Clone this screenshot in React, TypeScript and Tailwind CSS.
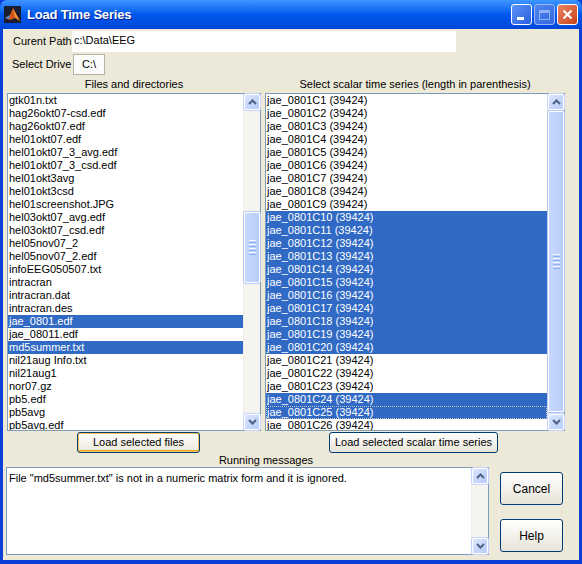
import React from "react";

const leftItems = [
  "gtk01n.txt",
  "hag26okt07-csd.edf",
  "hag26okt07.edf",
  "hel01okt07.edf",
  "hel01okt07_3_avg.edf",
  "hel01okt07_3_csd.edf",
  "hel01okt3avg",
  "hel01okt3csd",
  "hel01screenshot.JPG",
  "hel03okt07_avg.edf",
  "hel03okt07_csd.edf",
  "hel05nov07_2",
  "hel05nov07_2.edf",
  "infoEEG050507.txt",
  "intracran",
  "intracran.dat",
  "intracran.des",
  "jae_0801.edf",
  "jae_08011.edf",
  "md5summer.txt",
  "nil21aug Info.txt",
  "nil21aug1",
  "nor07.gz",
  "pb5.edf",
  "pb5avg",
  "pb5avg.edf",
];
const leftSelected = new Set([17, 19]);

const rightItems = Array.from({ length: 26 }, (_, i) => `jae_0801C${i + 1} (39424)`);
const rightSelected = new Set([9, 10, 11, 12, 13, 14, 15, 16, 17, 18, 19, 23, 24]);

function Chevron({ up }: { up: boolean }) {
  return (
    <svg width="9" height="6" viewBox="0 0 9 6">
      <path
        d={up ? "M1 5 L4.5 1.5 L8 5" : "M1 1 L4.5 4.5 L8 1"}
        fill="none"
        stroke="#4d6185"
        strokeWidth="2"
      />
    </svg>
  );
}

function ArrowBtn({ up }: { up: boolean }) {
  return (
    <div className="h-[16px] w-[16px] shrink-0 rounded-[2px] border border-[#ffffff] bg-gradient-to-br from-[#dce6fd] to-[#b6cbf8] flex items-center justify-center shadow-[0_0_0_1px_#c3d3fd]">
      <Chevron up={up} />
    </div>
  );
}

function Thumb({ cls }: { cls: string }) {
  return (
    <div className={`${cls} w-[16px] shrink-0 rounded-[2px] border border-[#ffffff] bg-gradient-to-r from-[#c9d8fc] to-[#b9cdf8] shadow-[0_0_0_1px_#b4c8f6] flex flex-col items-center justify-center gap-[1px]`}>
      <div className="h-[1px] w-[7px] bg-[#eef4fe]" />
      <div className="h-[1px] w-[7px] bg-[#8cb0f8]" />
      <div className="h-[1px] w-[7px] bg-[#eef4fe]" />
      <div className="h-[1px] w-[7px] bg-[#8cb0f8]" />
      <div className="h-[1px] w-[7px] bg-[#eef4fe]" />
      <div className="h-[1px] w-[7px] bg-[#8cb0f8]" />
      <div className="h-[1px] w-[7px] bg-[#eef4fe]" />
      <div className="h-[1px] w-[7px] bg-[#8cb0f8]" />
    </div>
  );
}

const font = { fontFamily: '"Liberation Sans", Arial, sans-serif' };

export default function App() {
  return (
    <div
      className="w-[582px] h-[564px] bg-[#0a3fd8] flex flex-col overflow-hidden text-[11px] text-black"
      style={font}
    >
      {/* Title bar */}
      <div className="h-[29px] shrink-0 flex items-center rounded-t-[7px] bg-gradient-to-b from-[#3d95ff] via-[#0058ee] to-[#0047d8] px-[4px]">
        <svg width="17" height="17" viewBox="0 0 17 17" className="shrink-0">
          <rect x="0" y="0" width="17" height="17" fill="#1a1d2e" />
          <path d="M1 12 L6 9 L9 2 L12 8 L16 15 L11 12 L6 14 Z" fill="#d8561c" />
          <path d="M9 2 L12 8 L16 15 L11 11 Z" fill="#f3a03a" />
          <path d="M1 12 L6 9 L5 13 Z" fill="#4a8cd4" />
        </svg>
        <div className="ml-[6px] text-[13px] font-bold text-white tracking-[-0.2px] [text-shadow:1px_1px_0_#0a1f8a]">
          Load Time Series
        </div>
        <div className="flex-1" />
        <div className="flex gap-[2px] items-center">
          <div className="h-[21px] w-[21px] rounded-[3px] border border-white bg-gradient-to-br from-[#5b92f7] to-[#2a60e0] flex items-end pl-[5px] pb-[4px]">
            <div className="h-[3px] w-[7px] bg-white" />
          </div>
          <div className="h-[21px] w-[21px] rounded-[3px] border border-[#9bb6f5] bg-gradient-to-br from-[#4d86f2] to-[#3468e2] flex items-center justify-center">
            <div className="h-[10px] w-[11px] border border-[#8fb0f5] border-t-[3px]" />
          </div>
          <div className="h-[21px] w-[21px] rounded-[3px] border border-white bg-gradient-to-br from-[#e8845e] to-[#c9431c] flex items-center justify-center">
            <svg width="11" height="11" viewBox="0 0 11 11">
              <path d="M1.5 1.5 L9.5 9.5 M9.5 1.5 L1.5 9.5" stroke="white" strokeWidth="2.2" />
            </svg>
          </div>
        </div>
      </div>

      {/* Body */}
      <div className="flex-1 mx-[3px] mb-[4px] bg-[#ece9d8] flex flex-col pl-[4px]">
        {/* Row 1 */}
        <div className="mt-[2px] h-[21px] flex items-start">
          <div className="w-[65px] pl-[6px] pt-[2px]">Curent Path</div>
          <div className="w-[384px] h-[21px] bg-white pl-[2px] pt-[1px]">c:\Data\EEG</div>
        </div>
        {/* Row 2 */}
        <div className="mt-[2px] h-[21px] flex items-center">
          <div className="w-[66px] pl-[5px]">Select Drive</div>
          <div className="w-[32px] h-[21px] bg-[#fbfbf9] border border-[#b5b2a4] flex items-center justify-center">
            C:\
          </div>
        </div>
        {/* Headers */}
        <div className="h-[18px] flex items-center">
          <div className="w-[254px] text-center pt-[1px]">Files and directories</div>
          <div className="w-[300px] ml-[4px] text-center pt-[1px]">
            Select scalar time series (length in parenthesis)
          </div>
        </div>
        {/* Lists */}
        <div className="h-[338px] flex gap-[4px]">
          <div className="w-[254px] h-[338px] border border-[#7f9db9] bg-white flex">
            <div className="flex-1 overflow-hidden flex flex-col">
              {leftItems.map((t, i) => (
                <div
                  key={t}
                  className={`h-[13px] shrink-0 leading-[13px] pl-[1px] whitespace-nowrap ${
                    leftSelected.has(i) ? "bg-[#316ac5] text-white" : ""
                  }`}
                >
                  {t}
                </div>
              ))}
            </div>
            <div className="w-[17px] bg-[#f5f4ef] border-l border-[#eeede5] flex flex-col items-center">
              <ArrowBtn up />
              <div className="h-[102px] shrink-0" />
              <Thumb cls="h-[71px]" />
              <div className="flex-1" />
              <ArrowBtn up={false} />
            </div>
          </div>
          <div className="w-[300px] h-[338px] border border-[#7f9db9] bg-white flex">
            <div className="flex-1 overflow-hidden flex flex-col">
              {rightItems.map((t, i) => (
                <div
                  key={t}
                  className={`h-[13px] shrink-0 leading-[13px] pl-[1px] whitespace-nowrap ${
                    rightSelected.has(i) ? "bg-[#316ac5] text-white" : ""
                  } ${i === 24 ? "outline outline-1 outline-dotted outline-offset-[-1px] outline-[#c0c0c0]" : ""}`}
                >
                  {t}
                </div>
              ))}
            </div>
            <div className="w-[17px] bg-[#f5f4ef] border-l border-[#eeede5] flex flex-col items-center">
              <ArrowBtn up />
              <div className="h-[1px] shrink-0" />
              <Thumb cls="flex-1" />
              <div className="h-[2px] shrink-0" />
              <ArrowBtn up={false} />
            </div>
          </div>
        </div>
        {/* Buttons row */}
        <div className="mt-[1px] h-[21px] flex">
          <div className="ml-[70px] w-[123px] h-[21px] rounded-[3px] border border-[#003c74] bg-gradient-to-b from-[#ffffff] to-[#ece9d8] shadow-[inset_0_0_0_1px_#f7c457,inset_0_-1px_0_1px_#e59f2a] flex items-center justify-center">
            Load selected files
          </div>
          <div className="ml-[129px] w-[169px] h-[21px] rounded-[3px] border border-[#003c74] bg-gradient-to-b from-[#ffffff] to-[#e6e4d8] flex items-center justify-center">
            Load selected scalar time series
          </div>
        </div>
        {/* Running messages */}
        <div className="h-[14px] flex">
          <div className="w-[518px] text-center leading-[14px]">Running messages</div>
        </div>
        {/* Messages + side buttons */}
        <div className="h-[88px] flex">
          <div className="ml-[-1px] w-[483px] h-[88px] border border-[#7f9db9] bg-white flex">
            <div className="flex-1 pl-[2px] pt-[4px] leading-[13px]">
              File "md5summer.txt" is not in a numeric matrix form and it is ignored.
            </div>
            <div className="w-[17px] bg-[#f5f4ef] border-l border-[#eeede5] flex flex-col items-center">
              <ArrowBtn up />
              <div className="flex-1" />
              <ArrowBtn up={false} />
            </div>
          </div>
          <div className="ml-[11px] flex flex-col">
            <div className="mt-[5px] w-[63px] h-[33px] rounded-[3px] border border-[#003c74] bg-gradient-to-b from-[#ffffff] to-[#e6e4d8] flex items-center justify-center text-[12px]">
              Cancel
            </div>
            <div className="mt-[14px] w-[63px] h-[33px] rounded-[3px] border border-[#003c74] bg-gradient-to-b from-[#ffffff] to-[#e6e4d8] flex items-center justify-center text-[12px]">
              Help
            </div>
          </div>
        </div>
      </div>
    </div>
  );
}
